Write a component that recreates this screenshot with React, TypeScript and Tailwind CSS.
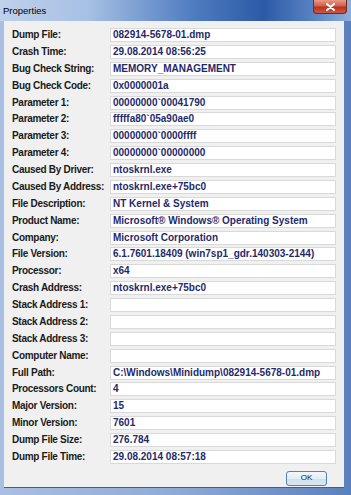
import React from "react";

// label / value pairs shown in the dialog
const rows: [string, string][] = [
  ["Dump File:", "082914-5678-01.dmp"],
  ["Crash Time:", "29.08.2014 08:56:25"],
  ["Bug Check String:", "MEMORY_MANAGEMENT"],
  ["Bug Check Code:", "0x0000001a"],
  ["Parameter 1:", "00000000`00041790"],
  ["Parameter 2:", "fffffa80`05a90ae0"],
  ["Parameter 3:", "00000000`0000ffff"],
  ["Parameter 4:", "00000000`00000000"],
  ["Caused By Driver:", "ntoskrnl.exe"],
  ["Caused By Address:", "ntoskrnl.exe+75bc0"],
  ["File Description:", "NT Kernel & System"],
  ["Product Name:", "Microsoft® Windows® Operating System"],
  ["Company:", "Microsoft Corporation"],
  ["File Version:", "6.1.7601.18409 (win7sp1_gdr.140303-2144)"],
  ["Processor:", "x64"],
  ["Crash Address:", "ntoskrnl.exe+75bc0"],
  ["Stack Address 1:", ""],
  ["Stack Address 2:", ""],
  ["Stack Address 3:", ""],
  ["Computer Name:", ""],
  ["Full Path:", "C:\\Windows\\Minidump\\082914-5678-01.dmp"],
  ["Processors Count:", "4"],
  ["Major Version:", "15"],
  ["Minor Version:", "7601"],
  ["Dump File Size:", "276.784"],
  ["Dump File Time:", "29.08.2014 08:57:18"],
];

export default function App() {
  return (
    <div
      className="w-[351px] h-[495px] flex flex-col bg-[linear-gradient(90deg,#a9bfe2_0%,#8eaad6_50%,#5a80bd_100%)]"
      style={{ fontFamily: '"Liberation Sans", Arial, sans-serif' }}
    >
      {/* Title bar */}
      <div className="h-[21px] flex items-center justify-between bg-[linear-gradient(90deg,#bfd1ea_0%,#a7c0e4_25%,#4f7cc0_55%,#2c5aa6_75%,#5b85c4_90%,#8fb0dc_100%)]">
        <span className="pl-[3px] pt-[1px] text-[9.5px] text-black">Properties</span>
        <div className="mr-[4px] self-start w-[34px] h-[14px] rounded-b-[4px] border border-[#6b2a22] border-t-0 bg-[linear-gradient(180deg,#e89a86_0%,#d1604a_45%,#b8331f_55%,#cf5a40_100%)] flex items-center justify-center">
          <svg width="9" height="8" viewBox="0 0 9 8">
            <path d="M1 1 L8 7 M8 1 L1 7" stroke="#fff" strokeWidth="2" strokeLinecap="round" />
          </svg>
        </div>
      </div>

      {/* Client area */}
      <div className="ml-[4px] mr-[7px] mb-[7px] flex-1 flex flex-col bg-[#f0f0f0] border-b border-[#3d5f96] pl-[8px] pr-[8px] pt-[7px]">
        <div className="flex flex-col gap-y-[2.88px]">
          {rows.map(([label, value]) => (
            <div key={label} className="flex items-center h-[14px]">
              <div className="w-[98px] text-[10px] font-bold text-[#1a1a1a] tracking-[-0.3px] whitespace-nowrap leading-none">
                {label}
              </div>
              <div className="w-[226px] h-[14px] bg-white border border-[#d9d9d9] flex items-center pl-[2px] text-[10px] font-bold text-[#1f2a6b] whitespace-nowrap leading-none overflow-hidden">
                {value}
              </div>
            </div>
          ))}
        </div>

        {/* Button row */}
        <div className="flex justify-end pr-[9px] mt-[7px]">
          <button className="w-[41px] h-[15px] rounded-[3px] border border-[#4a86b8] bg-[linear-gradient(180deg,#f2f6fa_0%,#e3edf5_50%,#cfdfec_51%,#dae7f1_100%)] text-[8px] text-[#1a1a1a] flex items-center justify-center leading-none">
            OK
          </button>
        </div>
      </div>
    </div>
  );
}
